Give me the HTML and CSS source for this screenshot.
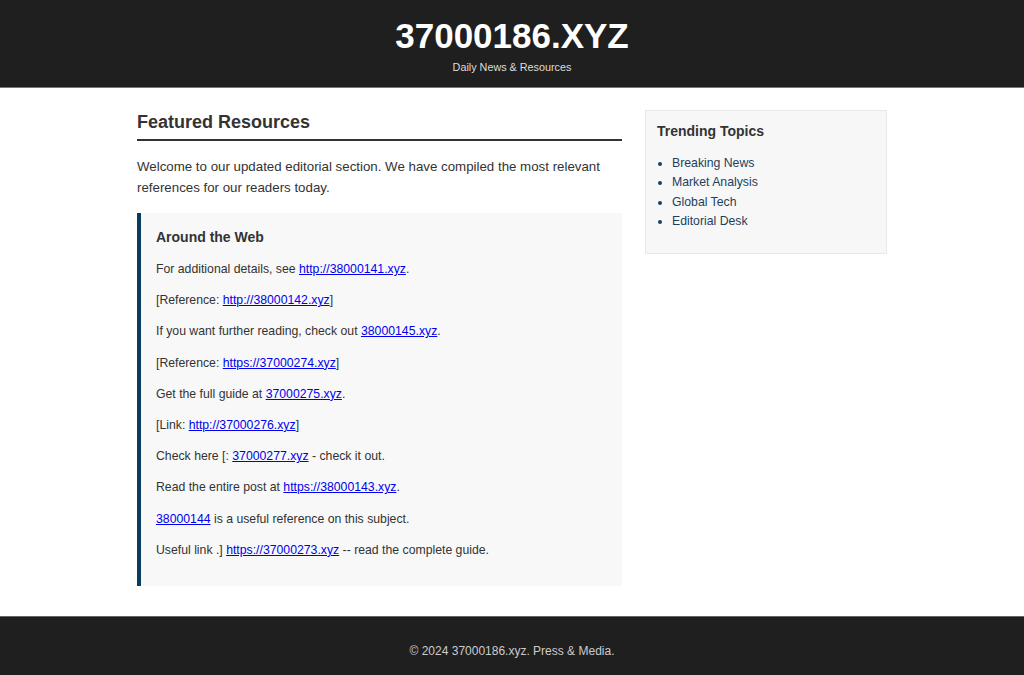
FILE: index.html
```html
<!DOCTYPE html>
<html lang="en">
<head>
<meta charset="utf-8">
<title>37000186.XYZ</title>
<link rel="stylesheet" href="styles.css">
</head>
<body>
<header class="site-header">
  <h1 class="site-title">37000186.XYZ</h1>
  <p class="site-tagline">Daily News &amp; Resources</p>
</header>
<div class="layout">
  <main class="main">
    <h2 class="section-title">Featured Resources</h2>
    <p class="intro">Welcome to our updated editorial section. We have compiled the most relevant references for our readers today.</p>
    <section class="web-box">
      <h3 class="box-title">Around the Web</h3>
      <p>For additional details, see <a href="#">http://38000141.xyz</a>.</p>
      <p>[Reference: <a href="#">http://38000142.xyz</a>]</p>
      <p>If you want further reading, check out <a href="#">38000145.xyz</a>.</p>
      <p>[Reference: <a href="#">https://37000274.xyz</a>]</p>
      <p>Get the full guide at <a href="#">37000275.xyz</a>.</p>
      <p>[Link: <a href="#">http://37000276.xyz</a>]</p>
      <p>Check here [: <a href="#">37000277.xyz</a> - check it out.</p>
      <p>Read the entire post at <a href="#">https://38000143.xyz</a>.</p>
      <p><a href="#">38000144</a> is a useful reference on this subject.</p>
      <p>Useful link .] <a href="#">https://37000273.xyz</a> -- read the complete guide.</p>
    </section>
  </main>
  <aside class="sidebar">
    <div class="side-box">
      <h3 class="side-title">Trending Topics</h3>
      <ul class="topics">
        <li>Breaking News</li>
        <li>Market Analysis</li>
        <li>Global Tech</li>
        <li>Editorial Desk</li>
      </ul>
    </div>
  </aside>
</div>
<footer class="site-footer">
  <p>&copy; 2024 37000186.xyz. Press &amp; Media.</p>
</footer>
</body>
</html>
```

FILE: styles.css
```css
* { box-sizing: border-box; }
html, body { margin: 0; padding: 0; }
body {
  font-family: "Liberation Sans", Arial, Helvetica, sans-serif;
  color: #333;
  background: #fff;
}
.site-header {
  background: #1f1f1f;
  color: #fff;
  text-align: center;
  height: 88px;
  padding-top: 16px;
  border-bottom: 1px solid #777;
}
.site-title {
  margin: 0;
  font-size: 35px;
  line-height: 40px;
  font-weight: bold;
}
.site-tagline {
  margin: 4px 0 0;
  font-size: 10.8px;
  line-height: 14px;
  color: #ddd;
}
.layout {
  width: 750px;
  margin: 22px auto 30px;
  display: grid;
  grid-template-columns: 485px 242px;
  column-gap: 23px;
  align-items: start;
}
.section-title {
  margin: 0;
  font-size: 18px;
  line-height: 22px;
  font-weight: bold;
  padding-top: 1px;
  padding-bottom: 6px;
  border-bottom: 2px solid #333;
}
.intro {
  margin: 15px 0 15px;
  font-size: 13.3px;
  line-height: 21px;
}
.web-box {
  background: #f8f8f8;
  border-left: 4px solid #0b3c5d;
  padding: 15px 15px 14px 15px;
}
.box-title {
  margin: 0 0 14px;
  font-size: 14px;
  line-height: 18px;
  font-weight: bold;
}
.web-box p {
  margin: 13px 0;
  font-size: 12.25px;
  line-height: 18.2px;
}
.web-box a { color: #0000ee; text-decoration: underline; }
.side-box {
  background: #f7f7f7;
  border: 1px solid #e8e8e8;
  padding: 11px 11px 12px;
}
.side-title {
  margin: 0 0 14px;
  font-size: 14px;
  line-height: 18px;
  font-weight: bold;
}
.topics {
  margin: 0 0 9px;
  padding-left: 15px;
  font-size: 12.25px;
  line-height: 19.4px;
  color: #1d3f5e;
}
.site-footer {
  background: #1f1f1f;
  border-top: 1px solid #666;
  height: 59px;
  display: flex;
  align-items: center;
  justify-content: center;
}
.site-footer p {
  margin: 0;
  padding-top: 9px;
  font-size: 12px;
  color: #ccc;
}
```
